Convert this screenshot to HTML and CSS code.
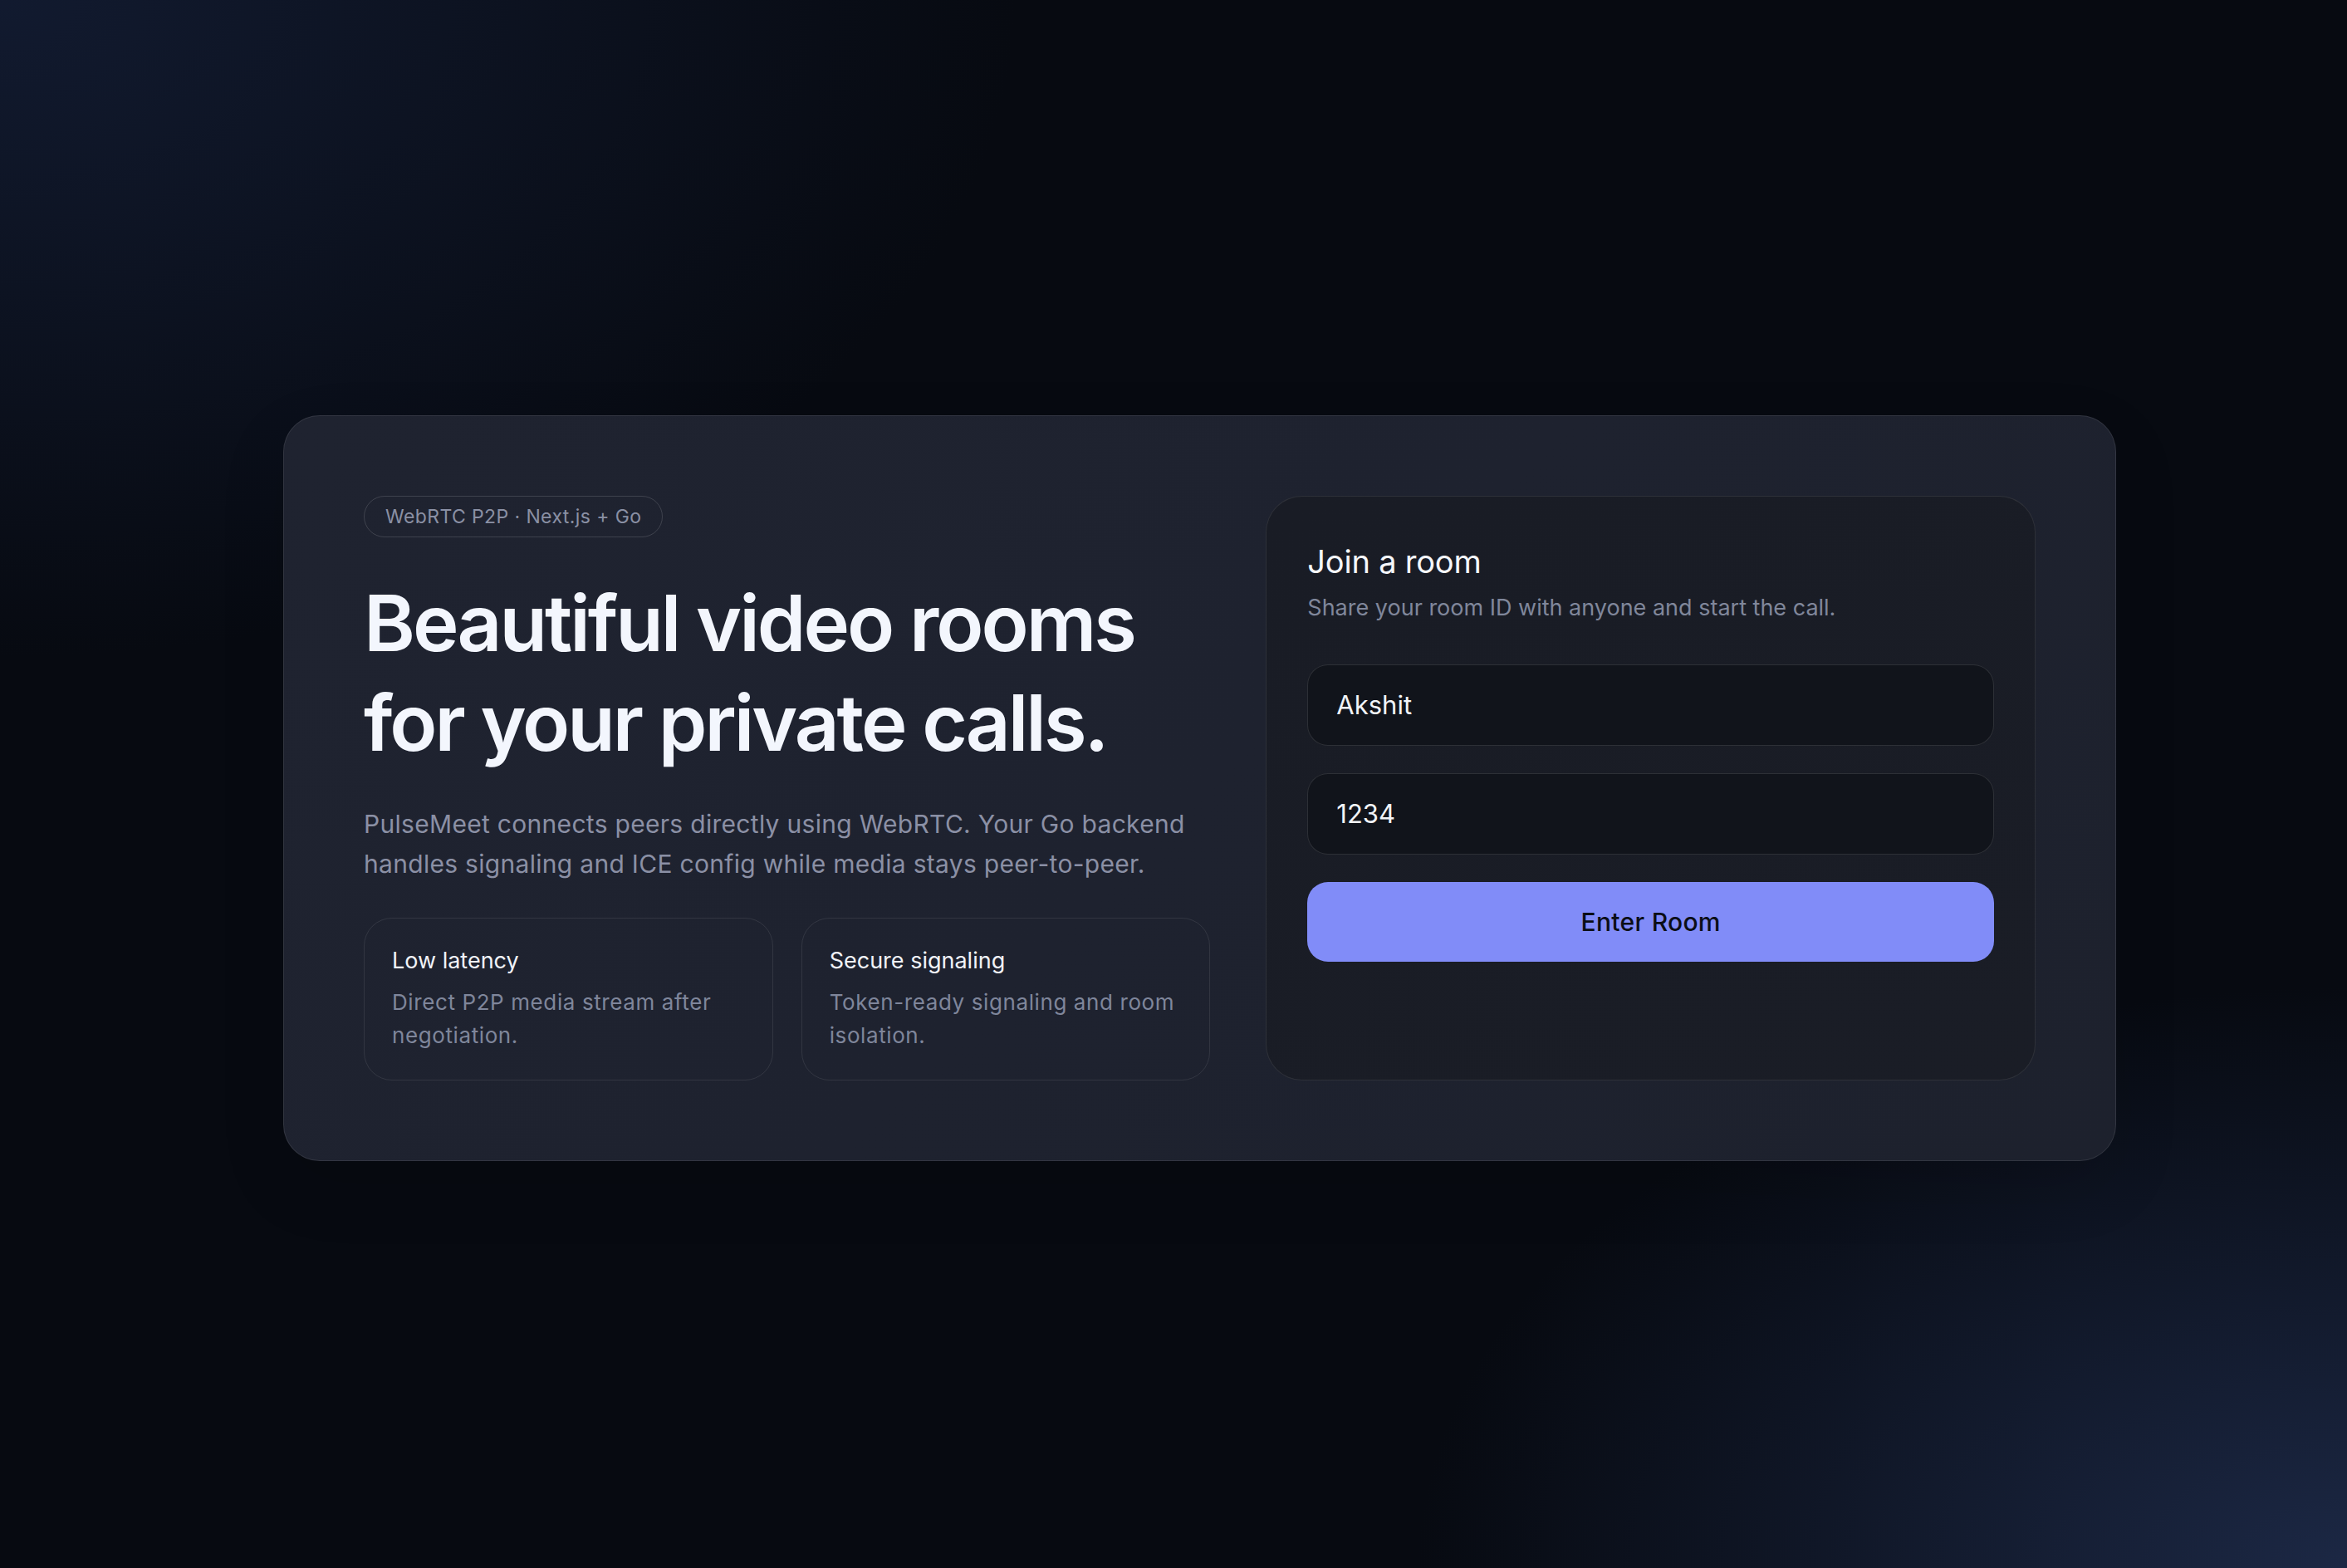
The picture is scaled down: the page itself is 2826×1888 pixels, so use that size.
FILE: index.html
```html
<!DOCTYPE html>
<html lang="en">

<head>
  <meta charset="UTF-8">
  <meta name="viewport" content="width=device-width, initial-scale=1.0">
  <title>PulseMeet</title>
  <link rel="stylesheet" href="styles.css">
</head>

<body>
  <main class="hero">
    <div class="intro">
      <span class="badge">WebRTC P2P · Next.js + Go</span>
      <h1 class="headline">Beautiful video rooms for your private calls.</h1>
      <p class="lead">PulseMeet connects peers directly using WebRTC. Your Go backend handles signaling and ICE config while media stays peer-to-peer.</p>
      <div class="features">
        <div class="feature">
          <h3>Low latency</h3>
          <p>Direct P2P media stream after negotiation.</p>
        </div>
        <div class="feature">
          <h3>Secure signaling</h3>
          <p>Token-ready signaling and room isolation.</p>
        </div>
      </div>
    </div>

    <form class="join" onsubmit="return false;">
      <h2>Join a room</h2>
      <p class="join-sub">Share your room ID with anyone and start the call.</p>
      <div class="fields">
        <input type="text" value="Akshit" placeholder="Your name">
        <input type="text" value="1234" placeholder="Room ID">
        <button type="submit">Enter Room</button>
      </div>
    </form>
  </main>
</body>

</html>
```

FILE: styles.css
```css
* {
  box-sizing: border-box;
}

body {
  margin: 0;
  min-height: 100vh;
  display: flex;
  align-items: center;
  justify-content: center;
  padding: 9px 0 0 63px;
  font-family: Inter, "Noto Sans", sans-serif;
  color: #f3f5fb;
  background-color: #070a11;
  background-image:
    radial-gradient(ellipse 1700px 1100px at 0% 0%, rgba(22, 33, 60, 0.7), transparent 72%),
    radial-gradient(ellipse 1600px 1000px at 100% 100%, rgba(30, 43, 74, 0.9), transparent 70%);
}

.hero {
  width: 2207px;
  display: grid;
  grid-template-columns: 1.1fr 1fr;
  gap: 67px;
  padding: 96px;
  border: 1px solid rgba(255, 255, 255, 0.09);
  border-radius: 44px;
  background: linear-gradient(135deg, #1f2330 0%, #1e222f 50%, #1d212d 100%);
  box-shadow: 0 30px 80px rgba(0, 0, 0, 0.12);
}

.intro {
  display: flex;
  flex-direction: column;
}

.badge {
  align-self: flex-start;
  height: 50px;
  padding: 0 25px;
  line-height: 48px;
  font-size: 23px;
  letter-spacing: 0.4px;
  color: #8a90a4;
  border: 1px solid rgba(255, 255, 255, 0.14);
  border-radius: 999px;
}

.headline {
  margin: 43px 0 0;
  font-size: 94px;
  line-height: 120px;
  font-weight: 600;
  letter-spacing: -0.032em;
  color: #f3f6fd;
}

.lead {
  margin: 38px 0 0;
  font-size: 30px;
  line-height: 48px;
  letter-spacing: 0.3px;
  color: #8b90a5;
}

.features {
  margin-top: 41px;
  display: grid;
  grid-template-columns: 1fr 1fr;
  gap: 34px;
}

.feature {
  padding: 33px;
  border: 1px solid rgba(255, 255, 255, 0.09);
  border-radius: 34px;
}

.feature h3 {
  margin: 0;
  font-size: 27px;
  line-height: 36px;
  font-weight: 400;
  color: #f1f3f8;
}

.feature p {
  margin: 12px 0 0;
  font-size: 26px;
  line-height: 40px;
  letter-spacing: 0.6px;
  color: #7f869b;
}

.join {
  padding: 52px 49px 49px;
  border: 1px solid rgba(255, 255, 255, 0.09);
  border-radius: 44px;
  background: linear-gradient(160deg, #191c25 0%, #1a1d26 100%);
}

.join h2 {
  margin: 0;
  font-size: 38px;
  line-height: 52px;
  font-weight: 400;
  letter-spacing: -0.2px;
  color: #f5f7fb;
}

.join-sub {
  margin: 10px 0 0;
  font-size: 27px;
  line-height: 40px;
  color: #80879b;
}

.fields {
  margin-top: 48px;
  display: flex;
  flex-direction: column;
  gap: 33px;
}

.fields input {
  height: 98px;
  padding: 0 34px;
  font-family: inherit;
  font-size: 31px;
  color: #f2f4f8;
  background: #11141b;
  border: 1px solid rgba(255, 255, 255, 0.12);
  border-radius: 25px;
  outline: none;
}

.fields button {
  height: 96px;
  font-family: inherit;
  font-size: 30px;
  font-weight: 500;
  letter-spacing: 0.3px;
  color: #0b0e16;
  background: #818cf8;
  border: none;
  border-radius: 25px;
  cursor: pointer;
}
```
